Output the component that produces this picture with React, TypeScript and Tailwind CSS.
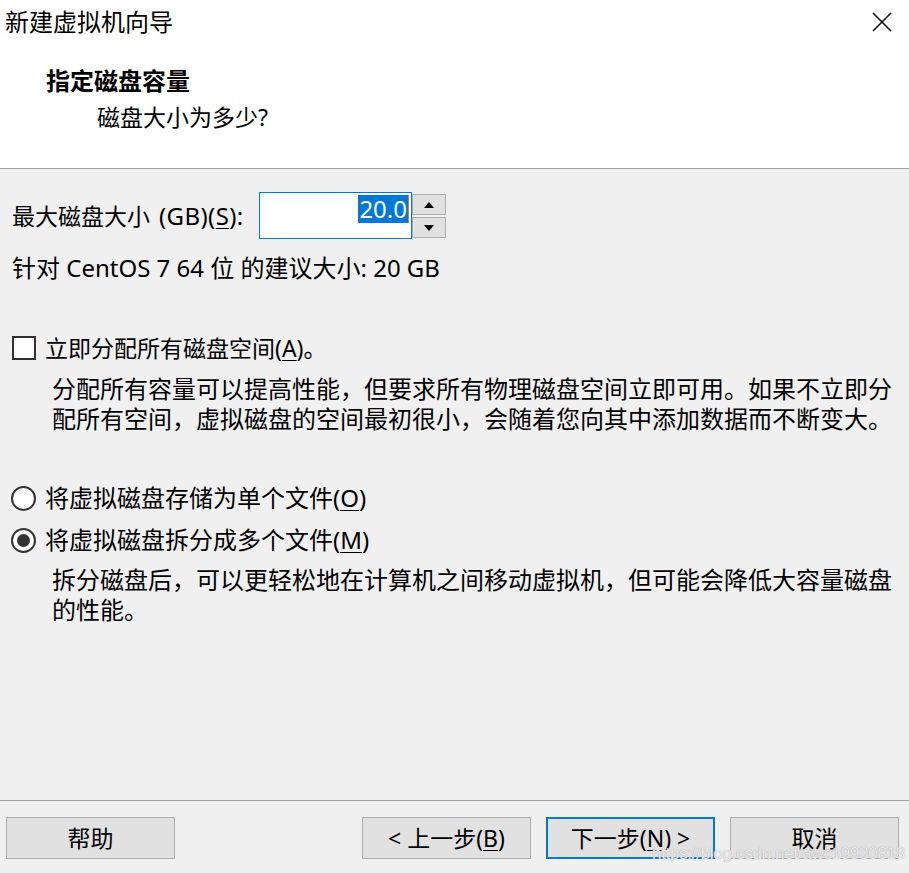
const font = { fontFamily: '"Noto Sans", "Noto Sans CJK SC", sans-serif' }

function Key({ k }: { k: string }) {
  return <span className="underline underline-offset-[3px] decoration-1">{k}</span>
}

function Button({ children, primary }: { children: React.ReactNode; primary?: boolean }) {
  return (
    <div
      className={
        "h-[42px] w-[169px] flex items-center justify-center bg-[#e1e1e1] text-[23px] text-black " +
        (primary ? "border-2 border-[#0078d7]" : "border border-[#adadad]")
      }
    >
      {children}
    </div>
  )
}

function Radio({ checked }: { checked?: boolean }) {
  return (
    <div className="w-[25px] h-[25px] rounded-full border-2 border-[#333] bg-white flex items-center justify-center shrink-0">
      {checked && <div className="w-[13px] h-[13px] rounded-full bg-[#333]" />}
    </div>
  )
}

export default function App() {
  return (
    <div className="w-[909px] h-[873px] flex flex-col bg-[#f0f0f0] text-black relative overflow-hidden" style={font}>
      {/* Header */}
      <div className="h-[169px] bg-white border-b border-[#a0a0a0] shrink-0">
        <div className="h-[44px] flex items-center justify-between pl-[5px] pr-[17px]">
          <span className="text-[24px] leading-[32px]">新建虚拟机向导</span>
          <svg width="20" height="20" viewBox="0 0 20 20">
            <path d="M1 1 L19 19 M19 1 L1 19" stroke="#111" strokeWidth="1.6" />
          </svg>
        </div>
        <div className="mt-[21px] pl-[46px] text-[24px] leading-[32px] font-bold">指定磁盘容量</div>
        <div className="mt-[4px] pl-[97px] text-[23px] leading-[32px]">磁盘大小为多少?</div>
      </div>

      {/* Body */}
      <div className="flex-1 pt-[23px] pl-[12px]">
        <div className="flex items-center h-[47px]">
          <span className="w-[247px] whitespace-nowrap flex items-baseline">
            <span className="text-[23px]">最大磁盘大小</span>
            <span className="text-[24px] ml-[9px] tracking-[0.4px]">
              (GB)(<Key k="S" />):
            </span>
          </span>
          <div className="w-[153px] h-[47px] border border-[#0078d7] bg-white flex justify-end items-start pt-[2px] pr-[2px]">
            <span className="bg-[#0078d7] text-white text-[24px] leading-[28px] px-[1px]">20.0</span>
            <span className="w-px h-[28px] bg-[#e08000]" />
          </div>
          <div className="flex flex-col gap-[2px] pt-[1px]">
            <div className="w-[34px] h-[21px] bg-[#e1e1e1] border border-[#adadad] flex items-center justify-center">
              <svg width="10" height="6" viewBox="0 0 10 6"><path d="M0 6 L5 0 L10 6 Z" fill="#000" /></svg>
            </div>
            <div className="w-[34px] h-[21px] bg-[#e1e1e1] border border-[#adadad] flex items-center justify-center">
              <svg width="10" height="6" viewBox="0 0 10 6"><path d="M0 0 L5 6 L10 0 Z" fill="#000" /></svg>
            </div>
          </div>
        </div>

        <div className="mt-[14px] text-[24px] leading-[30px] whitespace-nowrap">针对 CentOS 7 64 位 的建议大小: 20 GB</div>

        <div className="mt-[50px] flex items-center h-[30px]">
          <div className="w-[24px] h-[24px] border-2 border-[#333] bg-white shrink-0" />
          <span className="ml-[9px] text-[23px]">
            立即分配所有磁盘空间(<Key k="A" />)。
          </span>
        </div>

        <div className="mt-[11px] pl-[40px] text-[24px] leading-[30px] whitespace-nowrap">
          <div>分配所有容量可以提高性能，但要求所有物理磁盘空间立即可用。如果不立即分</div>
          <div>配所有空间，虚拟磁盘的空间最初很小，会随着您向其中添加数据而不断变大。</div>
        </div>

        <div className="mt-[49px] flex items-center h-[30px] -ml-[1px]">
          <Radio />
          <span className="ml-[9px] text-[24px]">
            将虚拟磁盘存储为单个文件(<Key k="O" />)
          </span>
        </div>
        <div className="mt-[12px] flex items-center h-[30px] -ml-[1px]">
          <Radio checked />
          <span className="ml-[9px] text-[24px]">
            将虚拟磁盘拆分成多个文件(<Key k="M" />)
          </span>
        </div>

        <div className="mt-[10px] pl-[40px] text-[24px] leading-[30px] whitespace-nowrap">
          <div>拆分磁盘后，可以更轻松地在计算机之间移动虚拟机，但可能会降低大容量磁盘</div>
          <div>的性能。</div>
        </div>
      </div>

      {/* Footer */}
      <div className="h-[73px] border-t border-[#a0a0a0] shrink-0 flex items-start pt-[16px] pl-[6px] pr-[10px]">
        <Button>帮助</Button>
        <div className="flex-1" />
        <div className="flex gap-[15px]">
          <Button>
            &lt; 上一步(<Key k="B" />)
          </Button>
          <Button primary>
            下一步(<Key k="N" />) &gt;
          </Button>
          <Button>取消</Button>
        </div>
      </div>

      {/* Watermark */}
      <div
        className="absolute left-[652px] top-[841px] text-[17px] text-white/80 tracking-[-0.3px] [text-shadow:0_0_1px_#888]"
        style={{ fontFamily: '"Liberation Sans", Arial, sans-serif' }}
      >
        https://blog.csdn.net/awc19930818
      </div>
    </div>
  )
}
